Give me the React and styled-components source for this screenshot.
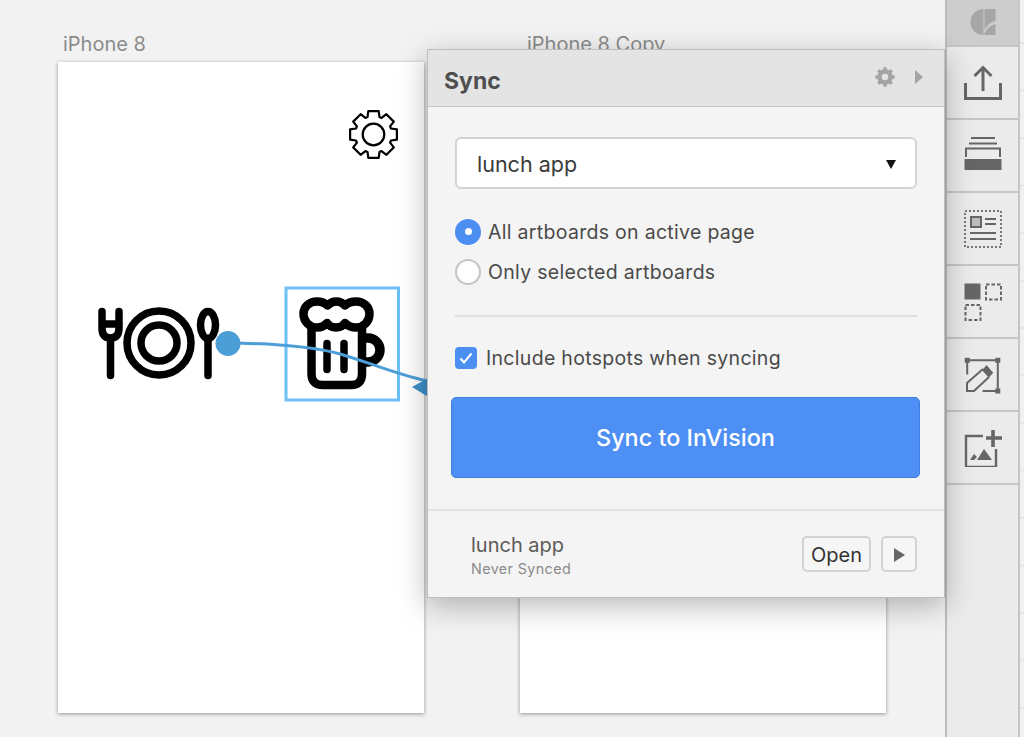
import styled, { createGlobalStyle } from "styled-components";

const Global = createGlobalStyle`
  html, body { margin: 0; padding: 0; height: 100%; overflow: hidden; }
  body { background: #f2f2f2; font-family: Inter, "Noto Sans", sans-serif; color: #333; }
  * { box-sizing: border-box; }
`;

/* ---- page ---- */

const Page = styled.div`
  display: flex;
  width: 1024px;
  height: 737px;
  overflow: hidden;
`;

const Canvas = styled.div`
  position: relative;
  z-index: 2;
  flex: 1;
  background: #f2f2f2;
`;

const BoardLabel = styled.div`
  position: absolute;
  top: 32px;
  left: ${p => p.$x}px;
  font-size: 20px;
  line-height: 24px;
  color: #8b8b8b;
`;

const Artboard = styled.div`
  position: absolute;
  top: 62px;
  left: ${p => p.$x}px;
  width: 366px;
  height: 651px;
  background: #fff;
  box-shadow: 0 1px 4px rgba(0, 0, 0, 0.4);
`;

const Drawing = styled.svg`
  position: absolute;
  left: 0;
  top: 0;
  width: 945px;
  height: 737px;
  overflow: visible;
`;

/* ---- sync popover ---- */

const Popover = styled.div`
  position: absolute;
  left: 427px;
  top: 49px;
  width: 518px;
  height: 549px;
  display: flex;
  flex-direction: column;
  background: #f4f4f4;
  border: 1px solid #bdbdbd;
  box-shadow: 0 8px 28px rgba(0, 0, 0, 0.28);
`;

const PopHeader = styled.div`
  display: flex;
  align-items: center;
  height: 57px;
  padding: 0 21px 0 16px;
  background: #e4e4e4;
  border-bottom: 1px solid #c6c6c6;
`;

const PopTitle = styled.div`
  flex: 1;
  font-size: 23px;
  font-weight: 700;
  color: #4f4f4f;
  padding-top: 5px;
`;

const HeaderIcons = styled.div`
  display: flex;
  align-items: center;
  gap: 20px;
  margin-bottom: 2px;
`;

const Caret = styled.span`
  width: 0;
  height: 0;
  border-left: 8px solid #a4a4a4;
  border-top: 7px solid transparent;
  border-bottom: 7px solid transparent;
`;

const PopBody = styled.div`
  flex: 1;
  display: flex;
  flex-direction: column;
  padding: 30px 27px 0 27px;
`;

const Select = styled.div`
  display: flex;
  align-items: center;
  justify-content: space-between;
  height: 52px;
  padding: 2px 19px 0 20px;
  background: #fff;
  border: 2px solid #d3d3d3;
  border-radius: 6px;
  font-size: 21.5px;
  color: #3a3a3a;
`;

const SelectArrow = styled.span`
  width: 0;
  height: 0;
  border-top: 9px solid #111;
  border-left: 5.5px solid transparent;
  border-right: 5.5px solid transparent;
`;

const RadioGroup = styled.div`
  display: flex;
  flex-direction: column;
  gap: 15px;
  margin-top: 30px;
  padding-bottom: 31px;
  border-bottom: 2px solid #dfdfdf;
`;

const Option = styled.div`
  display: flex;
  align-items: center;
  gap: ${p => p.$gap || 7}px;
  height: 25px;
  font-size: 19.5px;
  letter-spacing: 0.3px;
  color: #4a4a4a;
`;

const Radio = styled.span`
  display: flex;
  align-items: center;
  justify-content: center;
  width: 26px;
  height: 26px;
  border-radius: 50%;
  background: ${p => (p.$on ? "#4b8ff2" : "#fff")};
  border: ${p => (p.$on ? "0" : "2px solid #c4c4c4")};

  &::after {
    content: "";
    display: ${p => (p.$on ? "block" : "none")};
    width: 7px;
    height: 7px;
    border-radius: 50%;
    background: #fff;
  }
`;

const Check = styled.span`
  display: flex;
  align-items: center;
  justify-content: center;
  width: 22px;
  height: 22px;
  border-radius: 4px;
  background: #4b8ff2;
`;

const CheckRow = styled.div`
  margin-top: 28px;
`;

const SyncButton = styled.button`
  display: block;
  height: 81px;
  margin: 27px -3px 0 -4px;
  background: #4d8ff4;
  border: 1px solid #3f7edb;
  border-radius: 5px;
  color: #fff;
  font-family: inherit;
  font-size: 23.4px;
  font-weight: 500;
`;

const PopFooter = styled.div`
  display: flex;
  align-items: center;
  height: 88px;
  padding: 0 27px 0 43px;
  border-top: 2px solid #e2e2e2;
`;

const Project = styled.div`
  flex: 1;
  display: flex;
  flex-direction: column;
  gap: 3px;
  padding-top: 3px;
`;

const ProjectName = styled.div`
  font-size: 20px;
  line-height: 24px;
  color: #5a5a5a;
`;

const ProjectStatus = styled.div`
  font-size: 14.3px;
  line-height: 18px;
  letter-spacing: 0.4px;
  color: #8a8a8a;
`;

const SmallButton = styled.button`
  display: flex;
  align-items: center;
  justify-content: center;
  width: ${p => p.$w}px;
  height: 36px;
  margin-left: ${p => p.$ml || 0}px;
  padding: 1px 0 0;
  background: #f6f6f6;
  border: 2px solid #d2d2d2;
  border-radius: 5px;
  font-family: inherit;
  font-size: 20px;
  color: #333;
`;

const PlayGlyph = styled.span`
  width: 0;
  height: 0;
  border-left: 11px solid #666;
  border-top: 7.5px solid transparent;
  border-bottom: 7.5px solid transparent;
`;

/* ---- right toolbar ---- */

const Toolbar = styled.div`
  display: flex;
  flex-direction: column;
  flex: 0 0 79px;
  border-left: 2px solid #bcbcbc;
  background: linear-gradient(#e6e6e6 0 1.5px, #f1f1f1 1.5px) 0 42px / 100% 47.5px;
`;

const ToolCell = styled.div`
  display: flex;
  align-items: center;
  justify-content: center;
  width: 73px;
  height: ${p => p.$h || 73}px;
  background: ${p => (p.$active ? "#cdcdcd" : "#ebebeb")};
  border-right: 2px solid #c6c6c6;
  border-bottom: 2px solid #c6c6c6;
`;

const ToolRest = styled.div`
  flex: 1;
  width: 73px;
  background: #ebebeb;
  border-right: 2px solid #c6c6c6;
`;

const Tool = styled.svg`
  width: 38px;
  height: 38px;
  display: block;
`;

/* ---- drawings ---- */

function gearPath(cx, cy, rOut, rIn, teeth, top = 0.28, root = 0.42) {
  const step = (Math.PI * 2) / teeth;
  let d = "";
  for (let i = 0; i < teeth; i++) {
    const a = i * step - Math.PI / 2;
    const pts = [
      [rIn, a - step * root],
      [rOut, a - step * top],
      [rOut, a + step * top],
      [rIn, a + step * root],
    ];
    pts.forEach(([r, t], j) => {
      const x = (cx + r * Math.cos(t)).toFixed(1);
      const y = (cy + r * Math.sin(t)).toFixed(1);
      d += `${i === 0 && j === 0 ? "M" : "L"}${x} ${y} `;
    });
  }
  return d + "Z";
}

function BoardDrawing() {
  return (
    <Drawing viewBox="0 0 945 737">
      {/* gear */}
      <path d={gearPath(373.5, 134.5, 24, 18.5, 8)} fill="none" stroke="#000" strokeWidth="2.2" strokeLinejoin="round" />
      <circle cx="373.5" cy="134.5" r="10.8" fill="none" stroke="#000" strokeWidth="2.2" />

      {/* fork, plate, spoon */}
      <g fill="none" stroke="#000" strokeWidth="7.5" strokeLinecap="round">
        <path d="M102 311.5V328Q102 338 110.5 338Q119 338 119 328V311.5M102 324H119M110.5 338V375.5" />
        <circle cx="159" cy="343" r="32" />
        <circle cx="159" cy="343" r="18" />
        <ellipse cx="208" cy="325" rx="7.5" ry="13.5" />
        <path d="M208 340V375.5" />
      </g>

      {/* beer mug */}
      <g fill="none" stroke="#000" strokeWidth="8.5" strokeLinecap="round" strokeLinejoin="round">
        <path d="M303.5 314C303.500 307 309 301.500 317 301.500C322 301.500 325 303 327.500 305.500C330 303 333 301.500 336 301.500C339.500 301.500 343 303 345 305.500C347.500 303 351 301.500 356 301.500C364 301.500 369.500 307 369.500 314C369.500 321 364 327.500 356 327.500C351 327.500 348 326 345 323C343 326 339.500 327.500 336 327.500C332.500 327.500 329 326 327 323C324.500 326 321 327.500 317 327.500C309 327.500 303.500 321 303.500 314Z" />
        <path d="M311.5 328V374Q311.5 385 323 385H351Q362 385 362 374V328" />
        <path d="M363 338H368A12 12 0 0 1 368 362H363" strokeWidth="9.5" />
        <path d="M327 343.5V369.5M344 343.5V369.5" strokeWidth="7.5" />
      </g>

      {/* selection */}
      <rect x="286" y="288" width="112.5" height="112" fill="none" stroke="#6cc0fa" strokeWidth="3" />

      {/* connector */}
      <path d="M228 343C275 343.5 310 346 340 354C365 361 395 374 427 381" fill="none" stroke="#4c9fd6" strokeWidth="3" />
      <circle cx="228" cy="343.5" r="12.5" fill="#4c9fd6" />
      <path d="M412 387L430 377V398Z" fill="#3f90c8" />
    </Drawing>
  );
}

const toolStroke = { fill: "none", stroke: "#666", strokeWidth: 2 };

function LogoIcon() {
  return (
    <Tool viewBox="0 0 38 38">
      <path d="M19.5 5A13 13 0 0 0 19.5 31Z" fill="#a6a6a6" />
      <path d="M20.5 5H31.500V17Q24.500 18 20.500 26ZM31.500 20V31H20.500V29Q24.500 22 31.500 20Z" fill="#a6a6a6" />
    </Tool>
  );
}

function UploadIcon() {
  return (
    <Tool viewBox="0 0 38 38">
      <path d="M1.5 19V34.500H36.500V19" {...toolStroke} strokeWidth="3" />
      <path d="M19 27V4M10.500 12L19 3.500L27.500 12" {...toolStroke} strokeWidth="3" />
    </Tool>
  );
}

function LayersIcon() {
  return (
    <Tool viewBox="0 0 38 38">
      <path d="M7 1H31M5 6.500H33" {...toolStroke} />
      <path d="M2 20V11.500H36V20" {...toolStroke} />
      <rect x="0.500" y="22" width="37" height="11" fill="#666" />
    </Tool>
  );
}

function LayoutIcon() {
  return (
    <Tool viewBox="0 0 38 38">
      <rect x="1" y="1" width="36" height="36" {...toolStroke} strokeDasharray="2 2" stroke="#777" />
      <rect x="7" y="7" width="10" height="10" fill="#bbb" stroke="#666" strokeWidth="2" />
      <path d="M21 9H32M21 14H32M6 23H32M6 29H32" {...toolStroke} />
    </Tool>
  );
}

function SymbolsIcon() {
  return (
    <Tool viewBox="0 0 38 38">
      <rect x="0.500" y="0.500" width="16" height="16" fill="#666" />
      <rect x="22" y="1.500" width="15" height="15" {...toolStroke} strokeDasharray="3.500 2" />
      <rect x="1.500" y="22" width="15" height="15" {...toolStroke} strokeDasharray="3.500 2" />
    </Tool>
  );
}

function EditIcon() {
  return (
    <Tool viewBox="0 0 38 38">
      <path d="M3.200 18.500V4.300H33.800V35H18.500" {...toolStroke} />
      <path d="M19 13L3 27V35H10L25 21" {...toolStroke} />
      <path d="M18.200 14.300L22.500 9L29.200 16.700L24.800 21.700Z" fill="#666" />
      <rect x="0.700" y="1.800" width="5" height="5" fill="#666" />
      <rect x="31.300" y="1.800" width="5" height="5" fill="#666" />
      <rect x="31.300" y="32.500" width="5" height="5" fill="#666" />
    </Tool>
  );
}

function AddImageIcon() {
  return (
    <Tool viewBox="0 0 38 38">
      <path d="M19 7H2V38H32V20" {...toolStroke} strokeWidth="2.400" />
      <path d="M29 1V18M22 9H38" {...toolStroke} strokeWidth="3.600" />
      <path d="M6 31L10 25L13 28L10 31ZM13 31L20 20L28 31Z" fill="#666" />
    </Tool>
  );
}

function SmallGear() {
  return (
    <svg width="20" height="20" viewBox="0 0 20 20">
      <path d={gearPath(10, 10, 9.5, 7.5, 8, 0.17, 0.3)} fill="#a4a4a4" stroke="#a4a4a4" strokeWidth="0.500" />
      <circle cx="10" cy="10" r="3.300" fill="#e4e4e4" />
    </svg>
  );
}

export default function App() {
  return (
    <Page>
      <Global />
      <Canvas>
        <BoardLabel $x={63}>iPhone 8</BoardLabel>
        <BoardLabel $x={527}>iPhone 8 Copy</BoardLabel>
        <Artboard $x={58} />
        <Artboard $x={520} />
        <BoardDrawing />

        <Popover>
          <PopHeader>
            <PopTitle>Sync</PopTitle>
            <HeaderIcons>
              <SmallGear />
              <Caret />
            </HeaderIcons>
          </PopHeader>

          <PopBody>
            <Select>
              lunch app
              <SelectArrow />
            </Select>

            <RadioGroup>
              <Option>
                <Radio $on />
                All artboards on active page
              </Option>
              <Option>
                <Radio />
                Only selected artboards
              </Option>
            </RadioGroup>

            <CheckRow>
              <Option $gap={9}>
                <Check>
                  <svg width="14" height="12" viewBox="0 0 14 12">
                    <path d="M1.500 6.500L5 10.500L12.500 1.500" fill="none" stroke="#fff" strokeWidth="2" />
                  </svg>
                </Check>
                Include hotspots when syncing
              </Option>
            </CheckRow>

            <SyncButton>Sync to InVision</SyncButton>
          </PopBody>

          <PopFooter>
            <Project>
              <ProjectName>lunch app</ProjectName>
              <ProjectStatus>Never Synced</ProjectStatus>
            </Project>
            <SmallButton $w={69}>Open</SmallButton>
            <SmallButton $w={36} $ml={10}><PlayGlyph /></SmallButton>
          </PopFooter>
        </Popover>
      </Canvas>

      <Toolbar>
        <ToolCell $h={47} $active><LogoIcon /></ToolCell>
        <ToolCell><UploadIcon /></ToolCell>
        <ToolCell><LayersIcon /></ToolCell>
        <ToolCell><LayoutIcon /></ToolCell>
        <ToolCell><SymbolsIcon /></ToolCell>
        <ToolCell><EditIcon /></ToolCell>
        <ToolCell><AddImageIcon /></ToolCell>
        <ToolRest />
      </Toolbar>
    </Page>
  );
}
